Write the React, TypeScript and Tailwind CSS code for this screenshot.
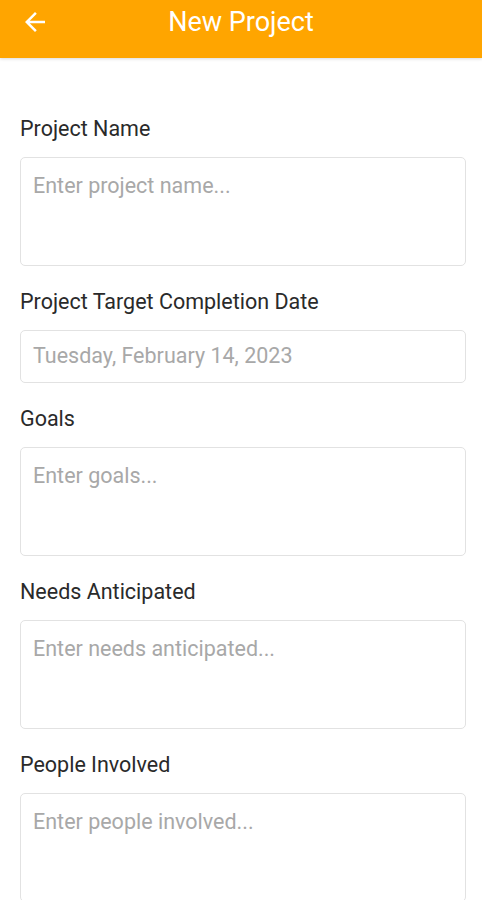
const fields = [
  { label: 'Project Name', placeholder: 'Enter project name...', multiline: true },
  { label: 'Project Target Completion Date', placeholder: 'Tuesday, February 14, 2023', multiline: false },
  { label: 'Goals', placeholder: 'Enter goals...', multiline: true },
  { label: 'Needs Anticipated', placeholder: 'Enter needs anticipated...', multiline: true },
  { label: 'People Involved', placeholder: 'Enter people involved...', multiline: true },
];

const BackArrow = () => (
  <svg width="30" height="30" viewBox="0 0 24 24" fill="white" aria-hidden="true">
    <path d="M20 11H7.83l5.59-5.59L12 4l-8 8 8 8 1.41-1.41L7.83 13H20v-2z" />
  </svg>
);

export default function App() {
  return (
    <div className="min-h-[900px] bg-white" style={{ fontFamily: 'Roboto, "Noto Sans", sans-serif' }}>
      {/* Header */}
      <header className="relative h-[58px] bg-[#ffa500] shadow-[0_1px_3px_rgba(0,0,0,0.15)]">
        <div className="flex h-[44px] items-center justify-center">
          <button className="absolute left-[20px] top-[7px]" aria-label="Back">
            <BackArrow />
          </button>
          <h1 className="text-[27px] leading-[32px] text-white">New Project</h1>
        </div>
      </header>

      {/* Form */}
      <div className="flex flex-col gap-[24px] pl-[20px] pr-[16px] pt-[59px]">
        {fields.map((f) => (
          <div key={f.label} className="flex flex-col gap-[16px]">
            <label className="text-[21.5px] leading-[24px] text-[#2a2a2a]">{f.label}</label>
            {f.multiline ? (
              <textarea
                placeholder={f.placeholder}
                className="h-[109px] w-full resize-none rounded-[5px] border border-[#e2e2e2] px-[12px] py-[15px] text-[21.5px] leading-[26px] text-[#222] outline-none placeholder:text-[#a8a8a8]"
              />
            ) : (
              <div className="flex h-[53px] w-full items-center rounded-[5px] border border-[#e2e2e2] px-[12px] text-[21.5px] text-[#a8a8a8]">
                {f.placeholder}
              </div>
            )}
          </div>
        ))}
      </div>
    </div>
  );
}
